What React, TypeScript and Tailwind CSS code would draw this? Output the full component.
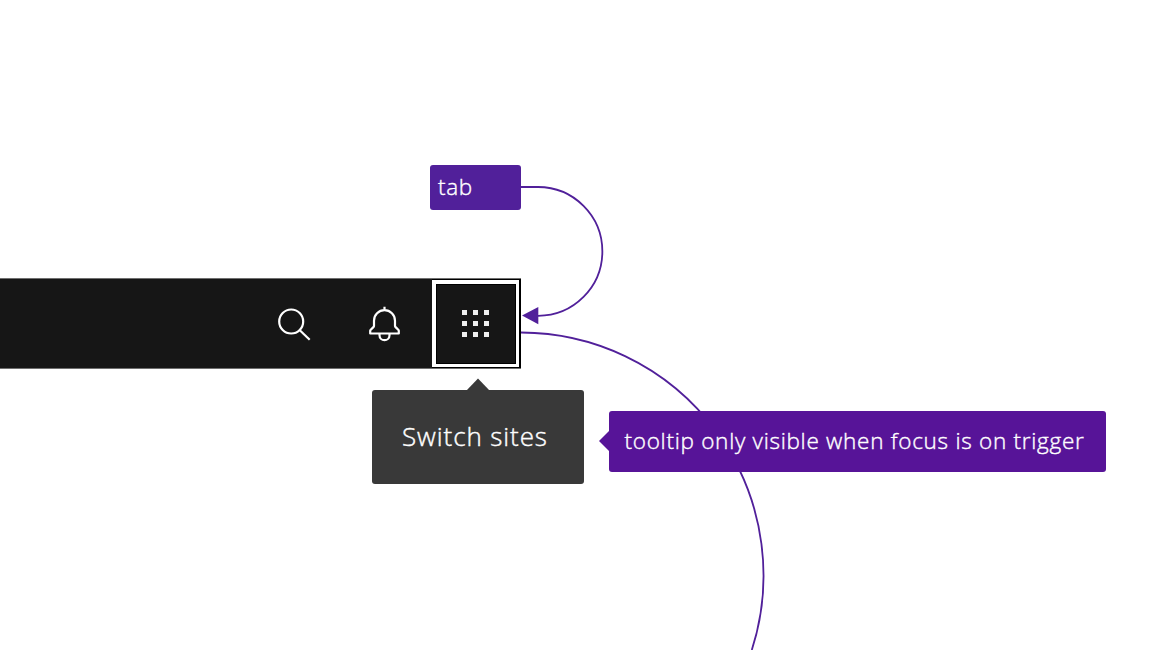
function SearchIcon() {
  return (
    <svg className="h-9 w-9" viewBox="276 306 36 36" fill="none" stroke="#ffffff" strokeWidth="2.2">
      <circle cx="291.2" cy="321.5" r="12" />
      <path d="M299.8 330.2 309.7 339.8" />
    </svg>
  );
}

function BellIcon() {
  return (
    <svg className="h-[38px] w-9" viewBox="367 304.5 36 38" fill="none" stroke="#ffffff" strokeWidth="2.2" strokeLinejoin="round">
      <path d="M384.5 306.2v4M370.2 333v-2.8q0-.4.3-.7l2.9-2.9q.6-.6.6-1.4v-5a10.5 10.5 0 0 1 21 0v5q0 .8.6 1.4l2.9 2.9q.3.3.3.7v2.8z" />
      <path d="M379.5 333.2v1.5a5 5 0 0 0 10 0v-1.5" />
    </svg>
  );
}

function SwitcherIcon() {
  return (
    <div className="mr-px grid grid-cols-3 gap-[6px]">
      {Array.from({ length: 9 }, (_, i) => (
        <span key={i} className="h-[5px] w-[5px] bg-[#f0f0f0]" />
      ))}
    </div>
  );
}

export default function App() {
  return (
    <main className="relative h-[650px] w-full overflow-hidden bg-white pt-[278px] font-['Open_Sans','Noto_Sans',sans-serif] font-light text-white [-webkit-text-stroke:0.4px_white]">
      <svg className="absolute left-0 top-0" width="1152" height="650" viewBox="0 0 1152 650" fill="none" stroke="#51209a" strokeWidth="1.8">
        <path d="M521 187H538A64.4 64.4 0 0 1 538 315.8" />
        <path d="M521 332.5A243 243 0 0 1 751.8 650" />
        <path d="M522 315.6 538.3 307V324.2z" fill="#51209a" stroke="none" />
      </svg>

      <header className="flex h-[91px] w-[521px] items-stretch justify-end border-y border-[#6f6f6f] bg-[#161616]">
        <div className="flex w-[92px] items-center justify-center pr-px pt-px">
          <SearchIcon />
        </div>
        <div className="flex w-[92px] items-center justify-center pr-[3px]">
          <BellIcon />
        </div>
        <button className="flex w-[89px] items-center justify-end border-y border-r-2 border-black bg-white pr-[3px]">
          <span className="flex h-[80px] w-[80px] items-center justify-center border border-black bg-[#161616]">
            <SwitcherIcon />
          </span>
        </button>
      </header>

      <div className="absolute left-[430px] top-[165px] flex h-[45px] w-[91px] items-center rounded-[3px] bg-[#51209a] pb-px pl-2 text-[22.5px] tracking-[0.7px]">
        tab
      </div>

      <div className="absolute left-[372px] top-[390px] flex h-[94px] w-[212px] items-center rounded-[3px] bg-[#393939] pb-px pl-[30px] text-[26px] tracking-[0.9px]">
        <svg className="absolute left-[94px] top-[-12px]" width="24" height="13" viewBox="0 0 24 13">
          <path d="M0 13 12 .5 24 13z" fill="#393939" />
        </svg>
        <span className="whitespace-nowrap">Switch sites</span>
      </div>

      <div className="absolute left-[609px] top-[411px] flex h-[61px] w-[497px] items-center rounded-[3px] bg-[#571498] pb-px pl-[15.5px] text-[22.5px] tracking-[0.73px]">
        <svg className="absolute left-[-10px] top-[19px]" width="11" height="22" viewBox="0 0 11 22">
          <path d="M11 0 0 11 11 22z" fill="#571498" />
        </svg>
        <span className="whitespace-nowrap">tooltip only visible when focus is on trigger</span>
      </div>
    </main>
  );
}
